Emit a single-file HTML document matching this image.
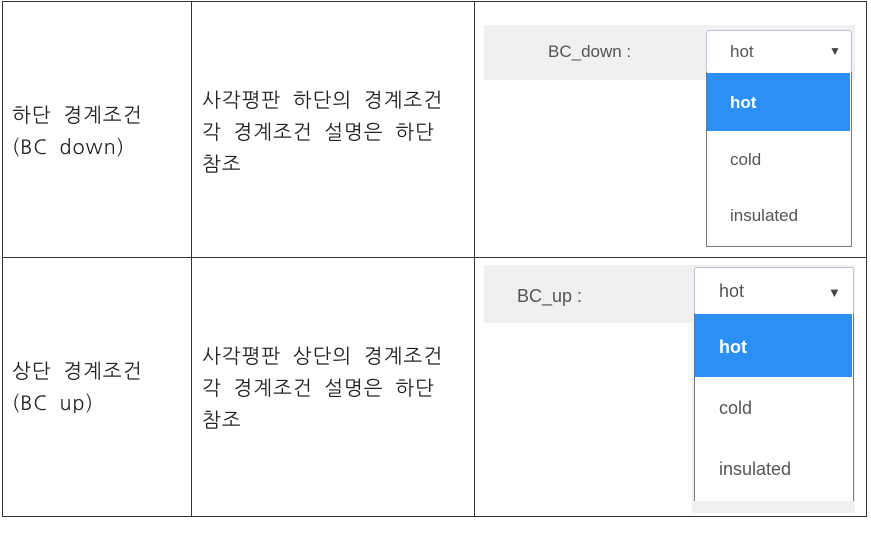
<!DOCTYPE html>
<html><head><meta charset="utf-8"><style>
body{margin:0;width:871px;height:533px;background:#fff;position:relative;overflow:hidden;font-family:"Liberation Sans",sans-serif}
.a{position:absolute}
.k{font-family:"NanumGothic","Noto Sans CJK KR",sans-serif;font-size:20px;color:#222;line-height:32px;letter-spacing:1px;word-spacing:5px;white-space:nowrap}
.ln{position:absolute;background:#333}
.t{color:#555;font-size:17px}
</style></head><body>
<div class="ln" style="left:2px;top:1px;width:865px;height:1px"></div>
<div class="ln" style="left:2px;top:516px;width:865px;height:1px"></div>
<div class="ln" style="left:2px;top:257px;width:865px;height:1px"></div>
<div class="ln" style="left:2px;top:1px;width:1px;height:516px"></div>
<div class="ln" style="left:866px;top:1px;width:1px;height:516px"></div>
<div class="ln" style="left:191px;top:1px;width:1px;height:516px"></div>
<div class="ln" style="left:474px;top:1px;width:1px;height:516px"></div>

<div class="a k" style="left:12px;top:99px">하단 경계조건<br>(BC down)</div>
<div class="a k" style="left:202px;top:84px">사각평판 하단의 경계조건<br>각 경계조건 설명은 하단<br>참조</div>
<div class="a k" style="left:12px;top:355px">상단 경계조건<br>(BC up)</div>
<div class="a k" style="left:202px;top:340px">사각평판 상단의 경계조건<br>각 경계조건 설명은 하단<br>참조</div>

<!-- row 1 widget -->
<div class="a" style="left:484px;top:25px;width:371px;height:55px;background:#f0f0f0"></div>
<div class="a t" style="left:548px;top:42px">BC_down :</div>
<div class="a" style="left:706px;top:30px;width:144px;height:41px;background:#fff;border:1px solid #b8c4d4;border-radius:3px"></div>
<div class="a t" style="left:730px;top:42px">hot</div>
<div class="a" style="left:829px;top:44px;font-size:12px;color:#444">▼</div>
<div class="a" style="left:706px;top:72px;width:144px;height:174px;background:#fff;border:1px solid #777;border-top:none"></div>
<div class="a" style="left:707px;top:73px;width:143px;height:58px;background:#2b8ff5"></div>
<div class="a" style="left:730px;top:93px;color:#fff;font-size:17px;font-weight:bold">hot</div>
<div class="a t" style="left:730px;top:150px">cold</div>
<div class="a t" style="left:730px;top:206px">insulated</div>

<!-- row 2 widget -->
<div class="a" style="left:484px;top:265px;width:371px;height:58px;background:#f0f0f0"></div>
<div class="a" style="left:692px;top:323px;width:163px;height:190px;background:#f0f0f0"></div>
<div class="a t" style="left:517px;top:286px;font-size:18px">BC_up :</div>
<div class="a" style="left:694px;top:267px;width:158px;height:46px;background:#fff;border:1px solid #b8c4d4;border-radius:3px"></div>
<div class="a t" style="left:719px;top:281px;font-size:18px">hot</div>
<div class="a" style="left:828px;top:285px;font-size:13px;color:#444">▼</div>
<div class="a" style="left:694px;top:313px;width:158px;height:188px;background:#fff;border:1px solid #777;border-top:none;border-bottom:none"></div>
<div class="a" style="left:695px;top:314px;width:157px;height:63px;background:#2b8ff5"></div>
<div class="a" style="left:719px;top:337px;color:#fff;font-size:18px;font-weight:bold">hot</div>
<div class="a t" style="left:719px;top:398px;font-size:18px">cold</div>
<div class="a t" style="left:719px;top:459px;font-size:18px">insulated</div>
</body></html>
